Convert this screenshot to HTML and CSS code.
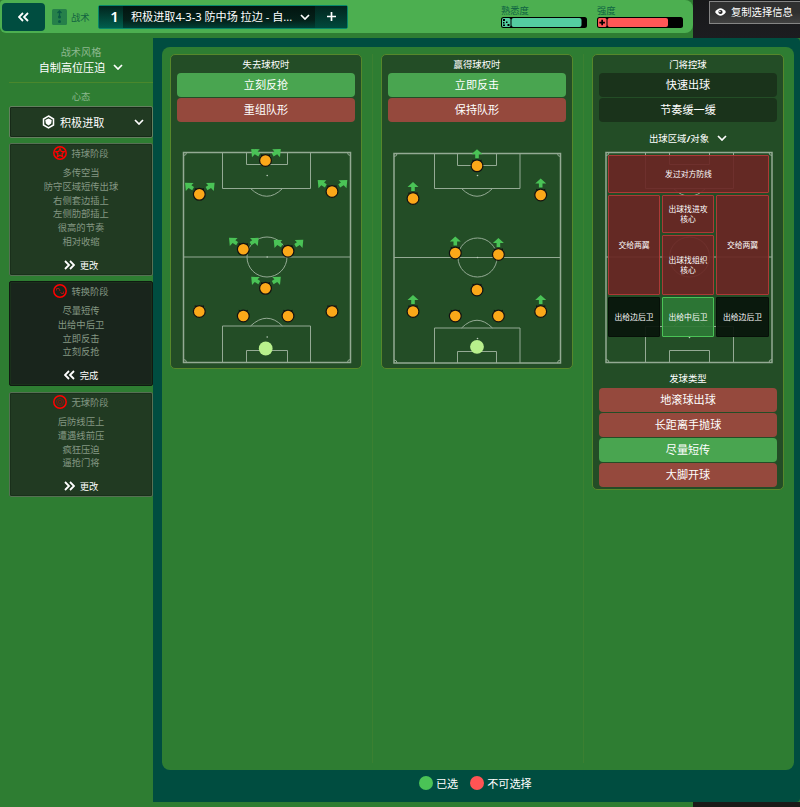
FILE: index.html
```html
<!DOCTYPE html>
<html lang="zh-CN">
<head>
  <meta charset="UTF-8">
  <title>战术</title>
  <link rel="stylesheet" href="styles.css">
</head>
<body>
  <svg class="defs" width="0" height="0">
    <symbol id="down" viewBox="0 0 10 6"><path d="M1 1l4 4 4-4" fill="none" stroke="currentColor" stroke-width="1.7"/></symbol>
    <symbol id="next" viewBox="0 0 11 10"><path d="M1 1l4 4-4 4M6 1l4 4-4 4" fill="none" stroke="currentColor" stroke-width="1.8"/></symbol>
    <symbol id="prev" viewBox="0 0 11 10"><path d="M5 1L1 5l4 4M10 1L6 5l4 4" fill="none" stroke="currentColor" stroke-width="1.8"/></symbol>
    <g id="up"><path d="M0-16.5l5.5 5h-3.7v4h-3.6v-4h-3.7z" fill="#4ac356"/></g>
    <g id="split">
      <path d="M-14.3-11.5l8.6.3-2.2 2.2 2.6 1.8-1.8 3.2-3.6-2.2-2.8 3z" fill="#4ac356"/>
      <path d="M15.3-11.5l-8.6.3 2.2 2.2-2.6 1.8 1.8 3.2 3.6-2.2 2.8 3z" fill="#4ac356"/>
    </g>
    <g id="player">
      <path d="M-4.5-6.2l3 1.3h3l3-1.3v3h-9z" fill="#111"/>
      <circle r="5.9" fill="#fba819" stroke="#111" stroke-width="1.2"/>
    </g>
  </svg>

  <header class="top">
    <div class="bar">
      <button class="back"><svg width="11" height="10"><use href="#prev"/></svg></button>
      <svg class="tactic-icon" width="15" height="16" viewBox="0 0 15 16">
        <rect width="15" height="16" rx="1.5" fill="#26804a"/>
        <path d="M7.5 2v6M5.5 4l2-2 2 2" fill="none" stroke="#0b5a44" stroke-width="1.3"/>
        <circle cx="7.5" cy="8" r="1.5" fill="#0b5a44"/><circle cx="7.5" cy="12.5" r="1.5" fill="#0b5a44"/>
      </svg>
      <span class="tactic-label">战术</span>
      <div class="tactic">
        <span class="num">1</span>
        <span class="name">积极进取4-3-3 防中场 拉边 - 自...</span>
        <svg width="10" height="6"><use href="#down"/></svg>
        <span class="plus"><svg width="9" height="9" viewBox="0 0 9 9"><path d="M4.5 0v9M0 4.5h9" stroke="#fff" stroke-width="1.7"/></svg></span>
      </div>
      <div class="meters">
        <div class="meter">
          <span>熟悉度</span>
          <svg width="86" height="11" viewBox="0 0 86 11">
            <rect width="86" height="11" rx="2.5"/>
            <rect x="1" y="1" width="8.5" height="9" rx="1.5" fill="#54cda0"/>
            <rect x="10.5" y="1" width="70" height="9" rx="2" fill="#54cda0"/>
            <path d="M2 2h2v2H2zM2 5h1.500v1.500H2zM2 7.500h2v1.500H2zM5 4.500h1.500V6H5zM6.500 7h2v2h-2z"/>
          </svg>
        </div>
        <div class="meter">
          <span>强度</span>
          <svg width="86" height="11" viewBox="0 0 86 11">
            <rect width="86" height="11" rx="2.5"/>
            <rect x="1" y="1" width="8.5" height="9" rx="1.5" fill="#ff5757"/>
            <rect x="10.5" y="1" width="60.5" height="9" rx="2" fill="#ff5757"/>
            <path d="M4.3 2.8h1.7v1.9h1.9v1.7h-1.9v1.9h-1.7v-1.9h-1.9v-1.7h1.9z"/>
          </svg>
        </div>
      </div>
    </div>
    <div class="corner">
      <button class="copy">
        <svg width="11" height="8" viewBox="0 0 11 8"><path d="M0 4Q5.5-3.5 11 4 5.5 11.5 0 4z" fill="#fff"/><circle cx="5.5" cy="4" r="2.1" fill="#222"/><circle cx="4.9" cy="3.5" r=".8" fill="#fff"/></svg>
        复制选择信息
      </button>
    </div>
  </header>

  <div class="main">
    <aside class="side">
      <div class="style">
        <span class="muted">战术风格</span>
        <div class="style-name">自制高位压迫 <svg width="10" height="6"><use href="#down"/></svg></div>
      </div>
      <div class="mood">心态</div>
      <div class="select">
        <svg width="13" height="14" viewBox="0 0 13 14">
          <path d="M6.5 1l5 3v6l-5 3-5-3v-6z" fill="none" stroke="#fff" stroke-width="1.5"/>
          <path d="M3.300 5l3.200-1.500L9.700 5 9.200 8.500 6.500 10.500 3.800 8.500z" fill="#fff"/>
        </svg>
        <span>积极进取</span>
        <svg class="arrow" width="10" height="6"><use href="#down"/></svg>
      </div>

      <section class="phase">
        <h3>
          <svg width="14" height="14" viewBox="0 0 14 14" fill="none" stroke="#f00">
            <circle cx="7" cy="7" r="6.2" stroke-width="1.5"/>
            <path d="M7 2.800l1.300 2.700 2.900.3-2.100 2 .6 3L7 9.300l-2.700 1.500.6-3-2.100-2 2.900-.3z" stroke-width="1.300"/>
          </svg>
          持球阶段
        </h3>
        <ul>
          <li>多传空当</li>
          <li>防守区域短传出球</li>
          <li>右侧套边插上</li>
          <li>左侧肋部插上</li>
          <li>很高的节奏</li>
          <li>相对收缩</li>
        </ul>
        <div class="action"><svg width="11" height="10"><use href="#next"/></svg>更改</div>
      </section>

      <section class="phase current">
        <h3>
          <svg width="14" height="14" viewBox="0 0 14 14" fill="none" stroke="#f00">
            <circle cx="7" cy="7" r="6.2" stroke-width="1.5"/>
            <path d="M3.5 6.500V4.500H6M6 4.500L7 7M7.500 8l1 1.500h2v-2" stroke="#a51414"/>
          </svg>
          转换阶段
        </h3>
        <ul>
          <li>尽量短传</li>
          <li>出给中后卫</li>
          <li>立即反击</li>
          <li>立刻反抢</li>
        </ul>
        <div class="action"><svg width="11" height="10"><use href="#prev"/></svg>完成</div>
      </section>

      <section class="phase">
        <h3>
          <svg width="14" height="14" viewBox="0 0 14 14" fill="none" stroke="#f00">
            <circle cx="7" cy="7" r="6.2" stroke-width="1.5"/>
            <path d="M7 3l3.800 2.800-1.500 4.400H4.700L3.200 5.800z" stroke="#7c1b14"/>
            <circle cx="7" cy="7" r="1.800" stroke="#7c1b14"/>
          </svg>
          无球阶段
        </h3>
        <ul>
          <li>后防线压上</li>
          <li>遭遇线前压</li>
          <li>疯狂压迫</li>
          <li>逼抢门将</li>
        </ul>
        <div class="action"><svg width="11" height="10"><use href="#next"/></svg>更改</div>
      </section>
    </aside>

    <main class="content">
      <div class="panel">
        <div class="col">
          <section class="card">
            <h2>失去球权时</h2>
            <button class="opt on">立刻反抢</button>
            <button class="opt off">重组队形</button>
            <svg class="field" width="190" height="223" viewBox="0 0 190 223">
              <g class="lines">
                <rect class="edge" x="12.5" y="7.5" width="167" height="210"/>
                <path d="M51.5 7.5v36h88v-36M75.5 7.5v12h41v-12M79.5 43.5q16.5 15.5 32 0M12.5 112h167M51.5 217.5v-36.5h88v36.5M75.5 217.5v-12h41v12M79.5 181q16.5-15.5 32 0"/>
                <circle cx="96" cy="112" r="20"/>
                <path d="M12.5 10.5q3 0 3-3M179.5 10.5q-3 0-3-3M12.5 214.5q3 0 3 3M179.5 214.5q-3 0-3 3"/>
              </g>
              <g fill="#b9c9b9"><circle cx="96.2" cy="30.5" r=".8"/><circle cx="96.2" cy="112" r=".8"/><circle cx="96.2" cy="192" r=".8"/></g>
              <use href="#split" x="94.5" y="15.5"/><use href="#player" x="94.5" y="15.5"/>
              <use href="#split" x="28.3" y="49.3"/><use href="#player" x="28.3" y="49.3"/>
              <use href="#split" x="161" y="46.5"/><use href="#player" x="161" y="46.5"/>
              <use href="#split" x="72.3" y="104.3"/><use href="#player" x="72.3" y="104.3"/>
              <use href="#split" x="117" y="106.2"/><use href="#player" x="117" y="106.2"/>
              <use href="#split" x="94.5" y="143.3"/><use href="#player" x="94.5" y="143.3"/>
              <use href="#player" x="28.3" y="166.5"/>
              <use href="#player" x="72.3" y="171"/>
              <use href="#player" x="117" y="171"/>
              <use href="#player" x="161" y="166.5"/>
              <circle cx="94.7" cy="203.5" r="6.9" fill="#b8f08c"/>
            </svg>
          </section>
        </div>

        <div class="col">
          <section class="card">
            <h2>赢得球权时</h2>
            <button class="opt on">立即反击</button>
            <button class="opt off">保持队形</button>
            <svg class="field" width="190" height="223" viewBox="0 0 190 223">
              <g class="lines">
                <rect class="edge" x="12" y="8.5" width="166.5" height="209.5"/>
                <path d="M52.5 8.5v35h85.5v-35M75.5 8.5v12h39v-12M79.5 43.5q15.5 15.5 31 0M12 112.5h166.5M52.5 218v-35h85.5v35M75.5 218v-11.5h39v11.5M79.5 183q15.5-15.5 31 0"/>
                <circle cx="95.5" cy="112.5" r="19.5"/>
                <path d="M12 11.5q3 0 3-3M178.5 11.5q-3 0-3-3M12 215q3 0 3 3M178.5 215q-3 0-3 3"/>
              </g>
              <g fill="#b9c9b9"><circle cx="95.5" cy="30.5" r=".8"/><circle cx="95.5" cy="112.5" r=".8"/><circle cx="95.5" cy="193.5" r=".8"/></g>
              <use href="#up" x="95" y="20.8"/><use href="#player" x="95" y="20.8"/>
              <use href="#up" x="31" y="53.5"/><use href="#player" x="31" y="53.5"/>
              <use href="#up" x="158.7" y="50"/><use href="#player" x="158.7" y="50"/>
              <use href="#up" x="73.3" y="108"/><use href="#player" x="73.3" y="108"/>
              <use href="#up" x="116.4" y="109.5"/><use href="#player" x="116.4" y="109.5"/>
              <use href="#player" x="95" y="145"/>
              <use href="#up" x="31" y="166.5"/><use href="#player" x="31" y="166.5"/>
              <use href="#player" x="73.3" y="171"/>
              <use href="#player" x="116.4" y="171"/>
              <use href="#up" x="158.7" y="166.5"/><use href="#player" x="158.7" y="166.5"/>
              <circle cx="95" cy="201.8" r="6.9" fill="#b8f08c"/>
            </svg>
          </section>
        </div>

        <div class="col">
          <section class="card">
            <h2>门将控球</h2>
            <button class="opt">快速出球</button>
            <button class="opt">节奏缓一缓</button>
            <div class="target"><span>出球区域<b>/</b>对象</span> <svg width="10" height="6"><use href="#down"/></svg></div>
            <div class="board">
              <svg width="190" height="222" viewBox="0 0 190 222">
                <g class="lines">
                  <rect class="edge" x="13" y="7.5" width="166" height="210"/>
                  <path d="M52.5 7.5v36h88v-36M76.5 7.5v12h40v-12M80.5 43.5q16 15.5 32 0M13 112h166M52.5 217.5v-36h88v36M76.5 217.5v-12h40v12M80.5 181.5q16-15.5 32 0"/>
                  <circle cx="96.5" cy="112" r="20"/>
                  <path d="M13 10.5q3 0 3-3M179 10.5q-3 0-3-3M13 214.5q3 0 3 3M179 214.5q-3 0-3 3"/>
                </g>
                <circle cx="96.5" cy="192.5" r=".8" fill="#b9c9b9"/>
              </svg>
              <div class="zones">
                <div class="zone red wide">发过对方防线</div>
                <div class="zone red tall">交给两翼</div>
                <div class="zone red">出球找进攻<br>核心</div>
                <div class="zone red tall right">交给两翼</div>
                <div class="zone red">出球找组织<br>核心</div>
                <div class="zone dark">出给边后卫</div>
                <div class="zone green">出给中后卫</div>
                <div class="zone dark">出给边后卫</div>
              </div>
            </div>
            <h2 class="sub">发球类型</h2>
            <button class="opt off">地滚球出球</button>
            <button class="opt off">长距离手抛球</button>
            <button class="opt on">尽量短传</button>
            <button class="opt off">大脚开球</button>
          </section>
        </div>
      </div>

      <footer class="legend">
        <i class="dot green-dot"></i>已选
        <i class="dot red-dot"></i>不可选择
      </footer>
    </main>
  </div>
  <div class="bottom"></div>
</body>
</html>
```

FILE: styles.css
```css
* {
  box-sizing: border-box;
}

body {
  margin: 0;
  width: 800px;
  height: 807px;
  overflow: hidden;
  display: flex;
  flex-direction: column;
  background: #2e7d32;
  color: #fff;
  font-family: "Noto Sans", "Noto Sans CJK SC", sans-serif;
  font-size: 11.1px;
}

svg {
  display: block;
  flex: none;
}

.defs {
  position: absolute;
}

button {
  font: inherit;
  color: inherit;
  border: none;
  padding: 0;
}

h2, h3, ul {
  margin: 0;
  padding: 0;
  font-weight: normal;
  list-style: none;
}

/* header */
.top {
  display: flex;
  height: 38px;
}

.bar {
  width: 693px;
  height: 33px;
  display: flex;
  align-items: center;
  background: #4caf50;
  border-radius: 4px 8px 8px 6px;
}

.back {
  width: 43px;
  height: 28px;
  margin-left: 2px;
  display: flex;
  align-items: center;
  justify-content: center;
  background: #004d40;
  border-radius: 4px;
}

.tactic-icon {
  margin-left: 7px;
}

.tactic-label {
  width: 19px;
  margin-left: 4px;
  font-size: 9.3px;
  color: #126240;
}

.tactic {
  width: 250px;
  height: 24px;
  margin-left: 8px;
  display: flex;
  align-items: center;
  background: linear-gradient(#02140f, #04211a 65%, #003f35);
  border: 1px solid #07866a;
  border-radius: 2px;
}

.num {
  width: 24px;
  height: 22px;
  padding-left: 7px;
  font-size: 15px;
  font-weight: 600;
  line-height: 21px;
  text-align: center;
  background: linear-gradient(#02251e, #005e4d);
}

.name {
  width: 170px;
  height: 18px;
  padding-left: 8px;
  line-height: 17px;
  white-space: nowrap;
}

.tactic > svg {
  margin-left: 7px;
}

.plus {
  height: 22px;
  flex: 1;
  margin-left: 5px;
  display: flex;
  align-items: center;
  justify-content: center;
  background: linear-gradient(#02251e, #00493c);
}

.meters {
  display: flex;
  gap: 10px;
  margin-left: 153px;
}

.meter {
  height: 26px;
  font-size: 9.3px;
  line-height: 13px;
  color: #0e6242;
}

.corner {
  flex: 1;
  display: flex;
  justify-content: flex-end;
  background: linear-gradient(#18191a, #1c1c20);
  overflow: hidden;
}

.copy {
  width: 91px;
  height: 23px;
  margin-top: 1px;
  padding: 0 0 2px 5px;
  display: flex;
  align-items: center;
  gap: 5px;
  flex: none;
  white-space: nowrap;
  font-size: 10.3px;
  background: linear-gradient(#303030 50%, #414141);
  border: 1px solid #858585;
  border-right: none;
}

/* left column */
.main {
  display: flex;
  height: 764px;
}

.side {
  width: 153px;
  flex: none;
  padding-left: 9px;
  text-align: center;
}

.style {
  height: 45px;
  padding-top: 7px;
  border-bottom: 1px solid #4a872c;
}

.muted {
  display: block;
  font-size: 10.2px;
  line-height: 14px;
  color: #8cb88e;
}

.style-name {
  height: 15px;
  display: flex;
  align-items: center;
  justify-content: center;
  gap: 8px;
}

.mood {
  height: 23px;
  padding-top: 3px;
  font-size: 9.3px;
  line-height: 22px;
  color: #8cb88e;
}

.select {
  height: 32px;
  padding: 0 8px 0 32px;
  display: flex;
  align-items: center;
  gap: 5px;
  background: #213a22;
  border: 1px solid #64805f;
  border-radius: 2px;
  box-shadow: inset 0 0 0 1px #172a18;
}

.arrow {
  margin-left: auto;
}

.phase {
  height: 133px;
  margin-top: 5px;
  padding-top: 2px;
  display: flex;
  flex-direction: column;
  font-size: 9.3px;
  color: #849783;
  background: #213a22;
  border: 1px solid #567054;
  border-radius: 2px;
  box-shadow: inset 0 0 0 1px #1a301b;
}

.phase + .phase {
  height: 105px;
}

.phase + .phase:last-child {
  margin-top: 6px;
}

.phase.current {
  background: #19251c;
  border-color: #101a12;
}

.phase h3 {
  height: 14px;
  display: flex;
  align-items: center;
  justify-content: center;
  gap: 4px;
  font-size: inherit;
}

.phase ul {
  margin-top: 6px;
}

.phase li {
  height: 13.8px;
  line-height: 13.8px;
}

.action {
  height: 14px;
  margin-top: 9px;
  display: flex;
  align-items: center;
  justify-content: center;
  gap: 5px;
  color: #fff;
}

/* right side */
.content {
  flex: 1;
  min-width: 0;
  padding: 9px 6px 0 9px;
  background: #004d40;
  border-radius: 0 4px 4px 0;
}

.panel {
  height: 723px;
  padding: 7px 0 7px 8px;
  display: flex;
  background: #2e7d32;
  border-radius: 8px;
}

.col {
  width: 192px;
  flex: none;
}

.col:not(:last-child) {
  width: 203px;
  margin-right: 8px;
  border-right: 1px solid #3b8031;
}

.card {
  width: 192px;
  display: flex;
  flex-direction: column;
  background: #234d26;
  border: 1px solid #56872b;
  border-radius: 5px;
}

.card h2 {
  height: 18px;
  font-size: 9.4px;
  line-height: 19px;
  text-align: center;
}

.card .sub {
  height: 21px;
  line-height: 24px;
}

.opt {
  height: 24px;
  margin: 0 6px 1px;
  line-height: 24px;
  text-align: center;
  background: #1a331b;
  border-radius: 4px;
}

.opt:last-child {
  margin-bottom: 2px;
}

.opt.on {
  background: #49a550;
}

.opt.off {
  background: #95493d;
}

.field {
  margin-top: 22px;
}

.lines {
  fill: none;
  stroke: #94aa94;
  stroke-width: 1;
}

.edge {
  stroke-width: 1.5;
}

.target {
  height: 22px;
  padding-top: 7px;
  display: flex;
  align-items: center;
  justify-content: center;
  gap: 8px;
  font-size: 9.4px;
}

.board {
  position: relative;
}

.zones {
  position: absolute;
  left: 15px;
  top: 10px;
  display: grid;
  grid-template-columns: 52px 52px 53px;
  grid-template-rows: 38px 38px 60px 40px;
  gap: 2px;
}

.zone {
  display: flex;
  align-items: center;
  justify-content: center;
  font-size: 7.8px;
  line-height: 10px;
  text-align: center;
  border: 1px solid;
  border-radius: 1px;
}

.wide {
  grid-column: 1 / 4;
}

.tall {
  grid-row: 2 / 4;
  grid-column: 1;
}

.right {
  grid-column: 3;
}

.red {
  background: rgba(106, 38, 36, 0.92);
  border-color: #ac3936;
}

.dark {
  background: rgba(10, 22, 12, 0.95);
  border-color: #061008;
}

.green {
  background: rgba(46, 120, 53, 0.92);
  border-color: #4ac356;
}

.legend {
  display: flex;
  align-items: center;
  height: 26px;
  padding-left: 257px;
}

.dot {
  width: 14px;
  height: 14px;
  margin-right: 3px;
  border-radius: 50%;
}

.green-dot {
  background: #4ac356;
}

.red-dot {
  margin-left: 12px;
  background: #ff5454;
}

.bottom {
  height: 5px;
  margin-left: 693px;
  background: #1b1a18;
}
```
